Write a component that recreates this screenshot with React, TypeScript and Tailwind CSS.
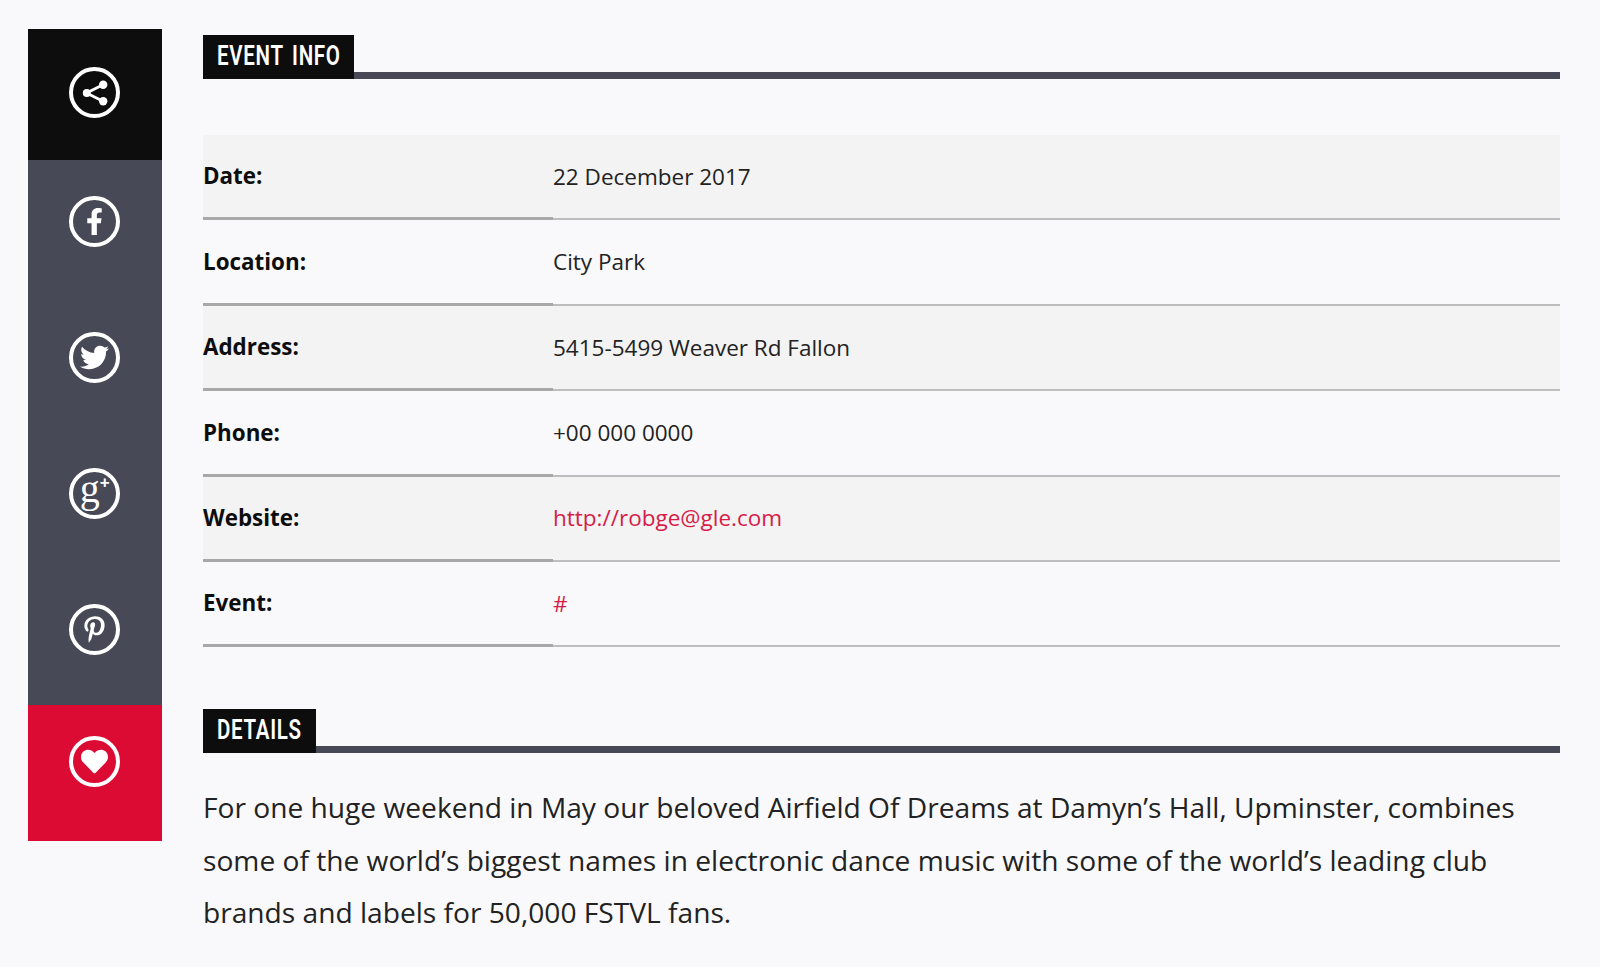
import { FaFacebookF, FaHeart, FaPinterestP, FaTwitter } from 'react-icons/fa';
import type { ReactNode } from 'react';

const rows = [
  { label: 'Date:', value: '22 December 2017' },
  { label: 'Location:', value: 'City Park' },
  { label: 'Address:', value: '5415-5499 Weaver Rd Fallon' },
  { label: 'Phone:', value: '+00 000 0000' },
  { label: 'Website:', value: 'http://robge@gle.com', link: true },
  { label: 'Event:', value: '#', link: true },
];

function Circle({ children }: { children: ReactNode }) {
  return (
    <div className="w-[51px] h-[51px] rounded-full border-[4px] border-white flex items-center justify-center text-white">
      {children}
    </div>
  );
}

function ShareIcon() {
  return (
    <svg width="28" height="28" viewBox="0 0 28 28" fill="white" stroke="white" strokeWidth="2.8">
      <path d="M22.5 5.5 5.5 14l17 8.5" fill="none" />
      <circle cx="5.8" cy="14" r="4" stroke="none" />
      <circle cx="22.2" cy="5.8" r="4.2" stroke="none" />
      <circle cx="22.2" cy="22.2" r="4.2" stroke="none" />
    </svg>
  );
}

function SectionTitle({ title, width }: { title: string; width: string }) {
  return (
    <div className="flex h-[44px]">
      <div className={`${width} shrink-0 bg-[#0d0d0d] flex items-center pl-[14px] pb-[2px] overflow-hidden`}>
        <span className="text-white text-[27px] leading-none font-semibold tracking-[0.9px] [word-spacing:4px] whitespace-nowrap origin-left scale-x-[0.76] font-['Roboto',sans-serif]">
          {title}
        </span>
      </div>
      <div className="flex-1 border-b-[7px] border-[#474956]" />
    </div>
  );
}

export default function App() {
  return (
    <div className="w-[1600px] h-[967px] overflow-hidden bg-[#f9f9fb] flex items-start gap-[41.5px] pl-[28px] pt-[29px] font-['Open_Sans',sans-serif]">
      <div className="w-[133.5px] shrink-0 flex flex-col items-stretch">
        <div className="h-[131px] bg-[#0d0d0d] flex justify-center pt-[38px]">
          <Circle>
            <ShareIcon />
          </Circle>
        </div>
        <div className="h-[545px] bg-[#474956] flex flex-col items-center gap-[85px] pt-[36px]">
          <Circle>
            <FaFacebookF size={27} />
          </Circle>
          <Circle>
            <FaTwitter size={29} />
          </Circle>
          <Circle>
            <div className="flex items-start leading-none">
              <span className="text-[40px] leading-[30px] h-[36px] -mt-[3px] font-['Liberation_Serif',serif]">g</span>
              <span className="text-[17px] font-bold leading-[18px] -mt-[3px] font-['Liberation_Sans',sans-serif]">+</span>
            </div>
          </Circle>
          <Circle>
            <FaPinterestP size={27} />
          </Circle>
        </div>
        <div className="h-[136px] bg-[#dc0b33] flex justify-center pt-[31px]">
          <Circle>
            <FaHeart size={27} />
          </Circle>
        </div>
      </div>

      <div className="w-[1357px] pt-[6px]">
        <SectionTitle title="EVENT INFO" width="w-[151px]" />

        <div className="mt-[56px]">
          {rows.map((row, i) => (
            <div
              key={row.label}
              className={`flex h-[85.4px] ${i % 2 === 0 ? 'bg-[#f3f3f4]' : ''}`}
            >
              <div className="w-[350px] shrink-0 border-b-[3px] border-[#a8a8a8] flex items-center text-[22.4px] font-bold text-[#0d0d0d]">
                {row.label}
              </div>
              <div
                className={`flex-1 border-b-2 border-[#bdbdbd] flex items-center text-[22.5px] ${
                  row.link ? 'text-[#d81c47]' : 'text-[#222222]'
                }`}
              >
                {row.value}
              </div>
            </div>
          ))}
        </div>

        <div className="mt-[62px]">
          <SectionTitle title="DETAILS" width="w-[113px]" />
        </div>

        <p className="mt-[28px] text-[28.15px] leading-[52.5px] text-[#222222]">
          For one huge weekend in May our beloved Airfield Of Dreams at Damyn’s Hall, Upminster, combines some of the
          world’s biggest names in electronic dance music with some of the world’s leading club brands and labels for
          50,000 FSTVL fans.
        </p>
      </div>
    </div>
  );
}
